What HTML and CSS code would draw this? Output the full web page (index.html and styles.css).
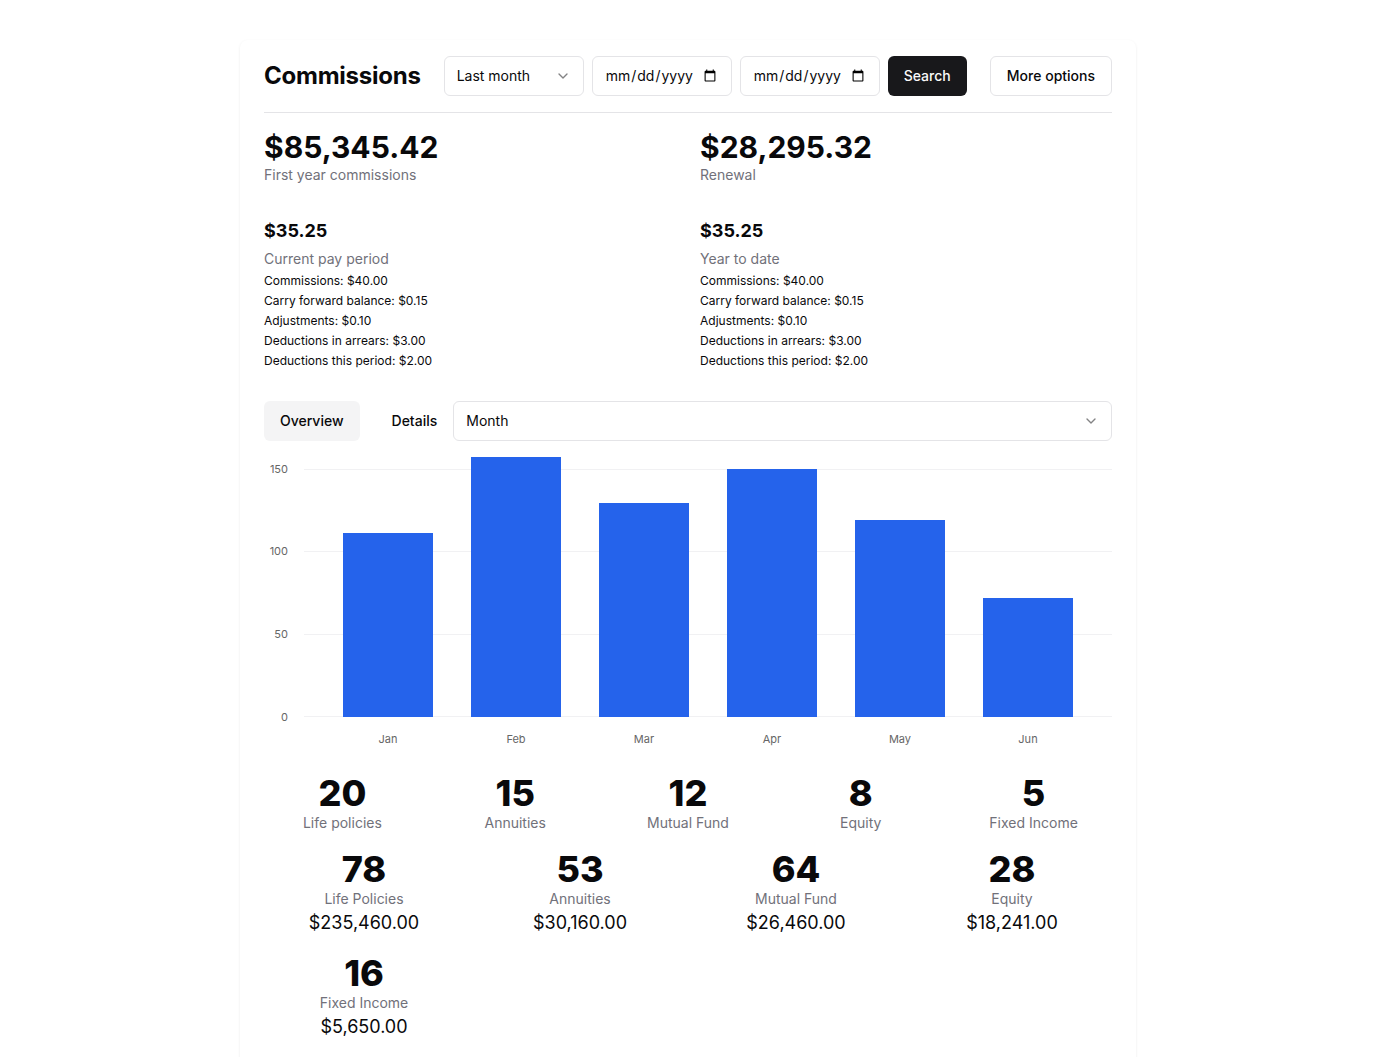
FILE: index.html
```html
<!DOCTYPE html>
<html lang="en">
<head>
<meta charset="utf-8">
<title>Commissions</title>
<link rel="stylesheet" href="styles.css">
</head>
<body>
<main class="card">
  <header class="header">
    <h1 class="title">Commissions</h1>
    <div class="controls">
      <button class="select select-range" type="button">
        <span>Last month</span>
        <svg class="chev" viewBox="0 0 24 24" width="16" height="16" fill="none" stroke="currentColor" stroke-width="2" stroke-linecap="round" stroke-linejoin="round"><path d="m6 9 6 6 6-6"/></svg>
      </button>
      <input class="date" type="date">
      <input class="date" type="date">
      <button class="btn btn-dark" type="button">Search</button>
    </div>
    <button class="btn btn-outline more" type="button">More options</button>
  </header>

  <section class="summary">
    <div class="col">
      <div class="big-block">
        <div class="big">$85,345.42</div>
        <div class="muted">First year commissions</div>
      </div>
      <div class="period">
        <div class="mid">$35.25</div>
        <div class="muted period-label">Current pay period</div>
        <ul class="lines">
          <li>Commissions: $40.00</li>
          <li>Carry forward balance: $0.15</li>
          <li>Adjustments: $0.10</li>
          <li>Deductions in arrears: $3.00</li>
          <li>Deductions this period: $2.00</li>
        </ul>
      </div>
    </div>
    <div class="col">
      <div class="big-block">
        <div class="big">$28,295.32</div>
        <div class="muted">Renewal</div>
      </div>
      <div class="period">
        <div class="mid">$35.25</div>
        <div class="muted period-label">Year to date</div>
        <ul class="lines">
          <li>Commissions: $40.00</li>
          <li>Carry forward balance: $0.15</li>
          <li>Adjustments: $0.10</li>
          <li>Deductions in arrears: $3.00</li>
          <li>Deductions this period: $2.00</li>
        </ul>
      </div>
    </div>
  </section>

  <section class="tabs-row">
    <div class="tabs">
      <button class="tab active" type="button">Overview</button>
      <button class="tab" type="button">Details</button>
    </div>
    <button class="select select-month" type="button">
      <span>Month</span>
      <svg class="chev" viewBox="0 0 24 24" width="16" height="16" fill="none" stroke="currentColor" stroke-width="2" stroke-linecap="round" stroke-linejoin="round"><path d="m6 9 6 6 6-6"/></svg>
    </button>
  </section>

  <section class="chart">
    <svg width="848" height="320" viewBox="0 0 848 320">
      <g class="grid" stroke="#f1f1f3" stroke-width="1">
        <line x1="40" y1="28.5" x2="848" y2="28.5"/>
        <line x1="40" y1="110.5" x2="848" y2="110.5"/>
        <line x1="40" y1="193.5" x2="848" y2="193.5"/>
        <line x1="40" y1="275.5" x2="848" y2="275.5"/>
      </g>
      <g class="ytick" text-anchor="end">
        <text x="24" y="32">150</text>
        <text x="24" y="114">100</text>
        <text x="24" y="197">50</text>
        <text x="24" y="280">0</text>
      </g>
      <g fill="#2563eb">
        <rect x="79" y="92" width="90" height="184"/>
        <rect x="207" y="16" width="90" height="260"/>
        <rect x="335" y="62" width="90" height="214"/>
        <rect x="463" y="28" width="90" height="248"/>
        <rect x="591" y="79" width="90" height="197"/>
        <rect x="719" y="157" width="90" height="119"/>
      </g>
      <g class="xtick" text-anchor="middle">
        <text x="124" y="302">Jan</text>
        <text x="252" y="302">Feb</text>
        <text x="380" y="302">Mar</text>
        <text x="508" y="302">Apr</text>
        <text x="636" y="302">May</text>
        <text x="764" y="302">Jun</text>
      </g>
    </svg>
  </section>

  <section class="stats5">
    <div class="stat"><div class="num">20</div><div class="muted">Life policies</div></div>
    <div class="stat"><div class="num">15</div><div class="muted">Annuities</div></div>
    <div class="stat"><div class="num">12</div><div class="muted">Mutual Fund</div></div>
    <div class="stat"><div class="num">8</div><div class="muted">Equity</div></div>
    <div class="stat"><div class="num">5</div><div class="muted">Fixed Income</div></div>
  </section>

  <section class="stats4">
    <div class="stat"><div class="num">78</div><div class="muted">Life Policies</div><div class="amt">$235,460.00</div></div>
    <div class="stat"><div class="num">53</div><div class="muted">Annuities</div><div class="amt">$30,160.00</div></div>
    <div class="stat"><div class="num">64</div><div class="muted">Mutual Fund</div><div class="amt">$26,460.00</div></div>
    <div class="stat"><div class="num">28</div><div class="muted">Equity</div><div class="amt">$18,241.00</div></div>
    <div class="stat"><div class="num">16</div><div class="muted">Fixed Income</div><div class="amt">$5,650.00</div></div>
  </section>
</main>
</body>
</html>
```
FILE: styles.css
```css
* { box-sizing: border-box; }

html, body {
  margin: 0;
  padding: 0;
  background: #ffffff;
}

body {
  font-family: Inter, "Noto Sans", "Liberation Sans", sans-serif;
  color: #09090b;
  padding-top: 40px;
}

.card {
  width: 896px;
  margin: 0 auto;
  padding: 16px 24px 24px;
  background: #fff;
  border-radius: 8px;
  box-shadow: 0 1px 3px 0 rgba(0,0,0,0.08), 0 1px 2px -1px rgba(0,0,0,0.06);
}

.header {
  display: flex;
  align-items: center;
  padding-bottom: 16px;
  border-bottom: 1px solid #e4e4e7;
}

.title {
  margin: 0 23px 0 0;
  font-size: 24px;
  line-height: 32px;
  font-weight: 700;
  letter-spacing: -0.01em;
}

.controls {
  display: flex;
  gap: 8px;
  align-items: center;
}

.select {
  display: flex;
  align-items: center;
  justify-content: space-between;
  height: 40px;
  padding: 0 12px;
  border: 1px solid #e4e4e7;
  border-radius: 6px;
  background: #fff;
  font-family: inherit;
  font-size: 14px;
  line-height: 20px;
  color: #09090b;
  text-align: left;
}

.select-range { width: 140px; }

.chev { color: #09090b; opacity: 0.5; flex: none; }

.date {
  width: 140px;
  height: 40px;
  padding: 0 12px 1px;
  border: 1px solid #e4e4e7;
  border-radius: 6px;
  background: #fff;
  font-family: inherit;
  font-size: 14px;
  color: #09090b;
}

.btn {
  height: 40px;
  padding: 0 16px;
  border-radius: 6px;
  font-family: inherit;
  font-size: 14px;
  line-height: 20px;
  font-weight: 500;
}

.btn-dark {
  background: #18181b;
  color: #fafafa;
  border: 0;
}

.btn-outline {
  background: #fff;
  color: #09090b;
  border: 1px solid #e4e4e7;
}

.more { margin-left: auto; }

.summary {
  display: grid;
  grid-template-columns: 1fr 1fr;
  gap: 24px;
  margin-top: 16px;
}

.big {
  font-size: 30px;
  line-height: 36px;
  font-weight: 700;
}

.muted {
  color: #71717a;
  font-size: 14px;
  line-height: 20px;
}

.period { margin-top: 32px; }

.mid {
  font-size: 18px;
  line-height: 28px;
  font-weight: 700;
}

.period-label { margin-top: 4px; }

.lines {
  list-style: none;
  margin: 2px 0 0;
  padding: 0;
  font-size: 12px;
  line-height: 20px;
}

.tabs-row {
  display: flex;
  margin-top: 30px;
}

.tabs {
  display: flex;
  gap: 16px;
}

.tab {
  height: 40px;
  padding: 0 16px;
  border: 0;
  border-radius: 6px;
  background: transparent;
  font-family: inherit;
  font-size: 14px;
  line-height: 20px;
  font-weight: 500;
  color: #09090b;
}

.tab.active { background: #f4f4f5; }

.select-month { flex: 1; }

.chart svg { display: block; }

.ytick text, .xtick text {
  font-family: Inter, "Noto Sans", sans-serif;
  font-size: 11px;
  fill: #666;
}

.stats5 {
  display: grid;
  grid-template-columns: repeat(5, 1fr);
  gap: 16px;
  margin-top: 12px;
}

.stats4 {
  display: grid;
  grid-template-columns: repeat(4, 1fr);
  gap: 16px;
  margin-top: 16px;
}

.stat {
  display: flex;
  flex-direction: column;
  align-items: center;
  text-align: center;
}

.num {
  font-size: 36px;
  line-height: 40px;
  font-weight: 800;
}

.amt {
  font-size: 18px;
  line-height: 28px;
}
```
